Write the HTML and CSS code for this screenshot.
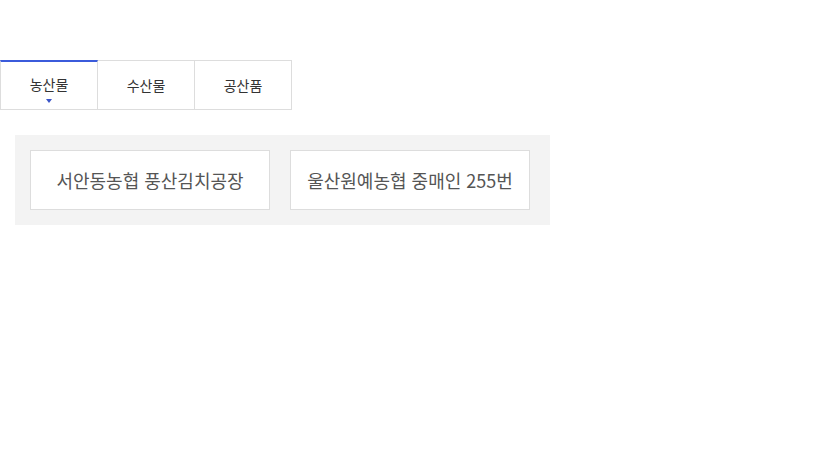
FILE: index.html
```html
<!DOCTYPE html>
<html lang="ko">
  <head>
    <meta charset="utf-8">
    <title>직거래 장터</title>
    <link rel="stylesheet" href="styles.css">
  </head>
  <body>
    <!-- 품목 탭 -->
    <ul class="tabs">
      <li class="tab on">농산물</li>
      <li class="tab">수산물</li>
      <li class="tab">공산품</li>
    </ul>

    <!-- 업체 목록 -->
    <div class="shop-box">
      <a class="shop" href="#">서안동농협 풍산김치공장</a>
      <a class="shop" href="#">울산원예농협 중매인 255번</a>
    </div>
  </body>
</html>
```

FILE: styles.css
```css
body {
    margin: 0;
    background-color: white;
    font-family: "Noto Sans CJK KR", "Noto Sans", sans-serif;
    }

.tabs {
    display: flex;
    list-style: none;
    margin: 60px 0 0 0;
    padding: 0;
    }

.tab {
    position: relative;
    box-sizing: border-box;
    width: 97px;
    height: 50px;
    padding-bottom: 1px;
    border: 1px solid #dddddd;
    border-left: none;
    display: flex;
    align-items: center;
    justify-content: center;
    font-size: 14px;
    color: #333333;
    }

.tab.on {
    width: 98px;
    border-left: 1px solid #dddddd;
    border-top: 2px solid #3b5bdb;
    padding-bottom: 3px;
    }

.tab.on::after {
    content: "";
    position: absolute;
    left: 45px;
    bottom: 6px;
    border-left: 3px solid transparent;
    border-right: 3px solid transparent;
    border-top: 4px solid #3b55c8;
    }

.shop-box {
    display: flex;
    gap: 20px;
    width: 505px;
    margin: 25px 0 0 15px;
    padding: 15px;
    background-color: #f3f3f3;
    }

.shop {
    box-sizing: border-box;
    width: 240px;
    height: 60px;
    display: flex;
    align-items: center;
    justify-content: center;
    background-color: white;
    border: 1px solid #dddddd;
    font-size: 18px;
    color: #555555;
    text-decoration: none;
    }
```
